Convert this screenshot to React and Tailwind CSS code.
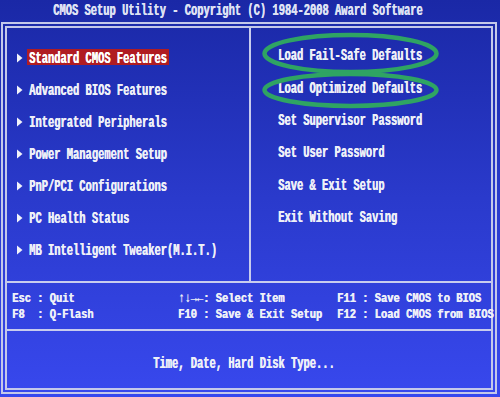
import React from "react";

const FONT =
  "font-['Liberation_Mono','DejaVu_Sans_Mono',monospace] font-bold text-[10.45px] leading-none";

function Line({ text, className = "", tight = false }) {
  return (
    <div className={`h-[16px] flex items-center whitespace-pre shrink-0 ${className}`}>
      <span
        className={`inline-block translate-y-[1.5px] [text-shadow:0.4px_0_0_currentColor] ${
          tight ? "scale-y-[1.3]" : "scale-y-150"
        }`}
      >
        {text}
      </span>
    </div>
  );
}

function Arrow() {
  return (
    <svg width="6" height="10" viewBox="0 0 6 10" className="shrink-0 translate-y-[1px]">
      <polygon points="0,0.5 5.5,5 0,9.5" fill="#f2f3fa" />
    </svg>
  );
}

const leftItems = [
  "Standard CMOS Features",
  "Advanced BIOS Features",
  "Integrated Peripherals",
  "Power Management Setup",
  "PnP/PCI Configurations",
  "PC Health Status",
  "MB Intelligent Tweaker(M.I.T.)",
];

const rightItems = [
  "Load Fail-Safe Defaults",
  "Load Optimized Defaults",
  "Set Supervisor Password",
  "Set User Password",
  "Save & Exit Setup",
  "Exit Without Saving",
];

export default function App() {
  return (
    <div
      className={`relative w-[500px] h-[397px] overflow-hidden bg-linear-to-b from-[#1a28a6] via-[#2a3acc] to-[#3848ee] text-[#eef0f8] flex flex-col ${FONT}`}
    >
      {/* title */}
      <div className="h-[22px] pt-[1px] pl-[53px] text-[#dfe2f4]">
        <Line text="CMOS Setup Utility - Copyright (C) 1984-2008 Award Software" />
      </div>

      {/* main box */}
      <div className="ml-[1px] w-[496px] h-[372px] border-[6px] border-double border-[#c4c8ea] flex flex-col">
        {/* menu area */}
        <div className="h-[253px] flex">
          <div className="w-[242px] pt-[21px] flex flex-col gap-[16px]">
            {leftItems.map((t, i) => (
              <div key={t} className="flex items-center pl-[10px]">
                <Arrow />
                {i === 0 ? (
                  <div className="ml-[4px] bg-[#b01c22] px-[2px] text-white">
                    <Line text={t} />
                  </div>
                ) : (
                  <div className="ml-[6px]">
                    <Line text={t} />
                  </div>
                )}
              </div>
            ))}
          </div>
          <div className="w-[2px] bg-[#c8ccee]" />
          <div className="flex-1 pt-[18.5px] pl-[27px] flex flex-col gap-[16.4px]">
            {rightItems.map((t) => (
              <Line key={t} text={t} />
            ))}
          </div>
        </div>

        <div className="h-[2px] bg-[#c8ccee]" />

        {/* keys */}
        <div className="h-[46px] pt-[6px] pl-[5px] flex">
          <div className="w-[166px] shrink-0 flex flex-col">
            <Line tight text="Esc : Quit" />
            <Line tight text="F8  : Q-Flash" />
          </div>
          <div className="w-[159px] shrink-0 flex flex-col">
            <Line tight text="↑↓→←: Select Item" />
            <Line tight text="F10 : Save & Exit Setup" />
          </div>
          <div className="shrink-0 flex flex-col">
            <Line tight text="F11 : Save CMOS to BIOS" />
            <Line tight text="F12 : Load CMOS from BIOS" />
          </div>
        </div>

        <div className="h-[2px] bg-[#c8ccee]" />

        {/* description */}
        <div className="flex-1 pt-[23px] pl-[146px]">
          <Line text="Time, Date, Hard Disk Type..." />
        </div>
      </div>

      {/* green annotation ellipses */}
      <svg
        className="absolute left-0 top-0 pointer-events-none"
        width="500"
        height="397"
        viewBox="0 0 500 397"
      >
        <ellipse cx="350.5" cy="53.5" rx="86" ry="18.5" fill="none" stroke="#2fa463" strokeWidth="4.5" />
        <ellipse cx="350.5" cy="90" rx="86" ry="16" fill="none" stroke="#2fa463" strokeWidth="4.5" />
      </svg>
    </div>
  );
}
